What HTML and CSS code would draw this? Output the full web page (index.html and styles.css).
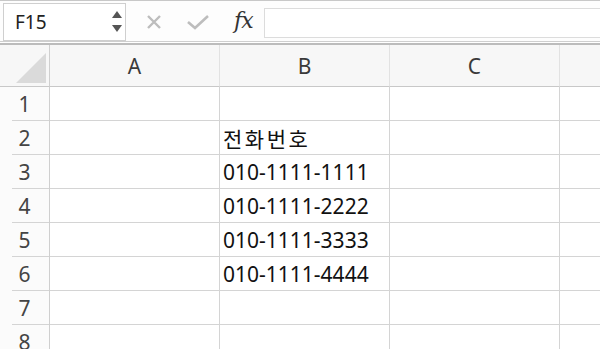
FILE: index.html
```html
<!DOCTYPE html>
<html lang="ko">
<head>
<meta charset="utf-8">
<title>Sheet</title>
<link rel="stylesheet" href="styles.css">
</head>
<body>
<div class="formula-bar">
  <div class="name-box">
    <span class="name-text">F15</span>
    <span class="spinner">
      <svg width="12" height="24" viewBox="0 0 12 24"><polygon points="6,1 11,8 1,8" fill="#555"/><polygon points="1,15 11,15 6,22" fill="#555"/></svg>
    </span>
  </div>
  <div class="fb-icons">
    <svg class="ic-x" width="18" height="18" viewBox="0 0 18 18"><path d="M3 3 L15 15 M15 3 L3 15" stroke="#bdbdbd" stroke-width="2.4" fill="none"/></svg>
    <svg class="ic-check" width="24" height="18" viewBox="0 0 24 18"><path d="M2 9 L9 15 L22 3" stroke="#bdbdbd" stroke-width="2.6" fill="none"/></svg>
    <span class="fx">fx</span>
  </div>
  <div class="formula-input"></div>
</div>
<div class="sep"></div>
<div class="sheet">
  <div class="corner"><span class="tri"></span></div>
  <div class="colhead">A</div>
  <div class="colhead">B</div>
  <div class="colhead">C</div>
  <div class="colhead last"></div>

  <div class="rowhead">1</div><div class="cell"></div><div class="cell"></div><div class="cell"></div><div class="cell last"></div>
  <div class="rowhead">2</div><div class="cell"></div><div class="cell ko">전화번호</div><div class="cell"></div><div class="cell last"></div>
  <div class="rowhead">3</div><div class="cell"></div><div class="cell">010-1111-1111</div><div class="cell"></div><div class="cell last"></div>
  <div class="rowhead">4</div><div class="cell"></div><div class="cell">010-1111-2222</div><div class="cell"></div><div class="cell last"></div>
  <div class="rowhead">5</div><div class="cell"></div><div class="cell">010-1111-3333</div><div class="cell"></div><div class="cell last"></div>
  <div class="rowhead">6</div><div class="cell"></div><div class="cell">010-1111-4444</div><div class="cell"></div><div class="cell last"></div>
  <div class="rowhead">7</div><div class="cell"></div><div class="cell"></div><div class="cell"></div><div class="cell last"></div>
  <div class="rowhead">8</div><div class="cell"></div><div class="cell"></div><div class="cell"></div><div class="cell last"></div>
</div>
</body>
</html>
```
FILE: styles.css
```css
html, body {
  margin: 0;
  padding: 0;
  background: #ffffff;
  overflow: hidden;
}
body {
  width: 600px;
  height: 349px;
  font-family: "Noto Sans", "Noto Sans CJK KR", sans-serif;
  color: #111;
}
.formula-bar {
  height: 40px;
  border-top: 1px solid #c8c8c8;
  background: #fdfdfd;
  display: flex;
  align-items: flex-start;
}
.name-box {
  box-sizing: border-box;
  margin: 2px 0 0 3px;
  width: 123px;
  height: 38px;
  border: 1px solid #cfcfcf;
  background: #fff;
  display: flex;
  align-items: center;
  justify-content: space-between;
  padding: 0 2px 0 11px;
}
.name-text {
  font-size: 19px;
  color: #222;
}
.spinner {
  display: flex;
  align-items: center;
}
.spinner svg { display: block; }
.fb-icons {
  display: flex;
  align-items: center;
  height: 38px;
  margin-left: 19px;
}
.ic-x { display: block; margin-top: 4px; }
.ic-check { display: block; margin-left: 23px; margin-top: 4px; }
.fx {
  margin-left: 24px;
  font-family: "DejaVu Serif", "Liberation Serif", serif;
  font-style: italic;
  font-size: 22px;
  color: #333;
  letter-spacing: -1px;
}
.formula-input {
  flex: 1;
  box-sizing: border-box;
  margin: 7px 0 0 11px;
  height: 30px;
  border: 1px solid #dcdcdc;
  border-right: none;
  background: #fff;
}
.sep {
  box-sizing: border-box;
  height: 4px;
  border-top: 1px solid #cfcfcf;
  border-bottom: 2px solid #bcbcbc;
  background: #fff;
}
.sheet {
  display: grid;
  grid-template-columns: 50px 170px 170px 170px 40px;
  grid-template-rows: 42px repeat(8, 34px);
}
.corner, .colhead {
  box-sizing: border-box;
  background: #f7f7f7;
  border-bottom: 1px solid #c8c8c8;
  border-right: 1px solid #e2e2e2;
}
.corner {
  position: relative;
  border-right: 1px solid #cfcfcf;
}
.tri {
  position: absolute;
  left: 16px;
  top: 8px;
  width: 30px;
  height: 30px;
  background: #dadada;
  clip-path: polygon(100% 0, 100% 100%, 0 100%);
}
.colhead {
  display: flex;
  align-items: center;
  justify-content: center;
  font-size: 21px;
  color: #3a3a3a;
}
.colhead.last, .cell.last { border-right: none; }
.rowhead {
  box-sizing: border-box;
  position: relative;
  background: #fbfbfb;
  border-right: 1px solid #cfcfcf;
  display: flex;
  align-items: center;
  justify-content: center;
  font-size: 21px;
  color: #444;
}
.rowhead::after {
  content: "";
  position: absolute;
  left: 12px;
  right: 0;
  bottom: 0;
  height: 1px;
  background: #d4d4d4;
}
.cell {
  box-sizing: border-box;
  border-right: 1px solid #d4d4d4;
  border-bottom: 1px solid #d4d4d4;
  display: flex;
  align-items: center;
  padding-left: 3px;
  font-size: 21px;
  color: #111;
  white-space: nowrap;
}
.cell.ko {
  letter-spacing: 2.5px;
}
```
